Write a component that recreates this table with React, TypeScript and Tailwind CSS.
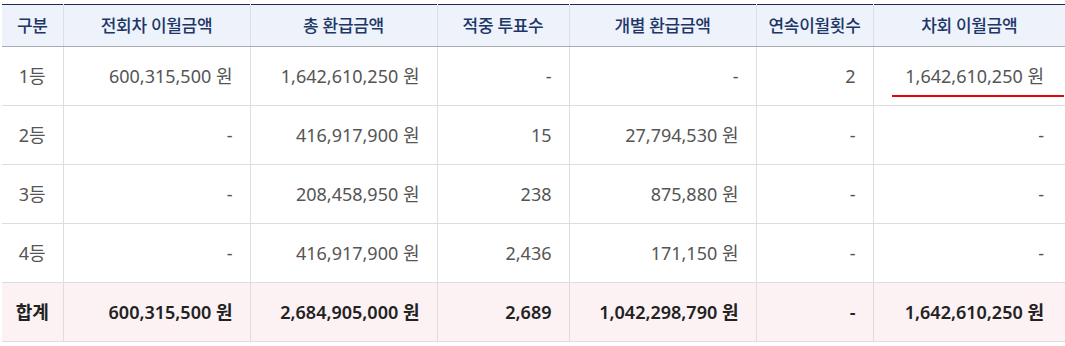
import React from 'react';

type Row = {
  rank: string;
  prev: string;
  total: string;
  winners: string;
  each: string;
  streak: string;
  next: string;
};

const rows: Row[] = [
  { rank: '1등', prev: '600,315,500 원', total: '1,642,610,250 원', winners: '-', each: '-', streak: '2', next: '1,642,610,250 원' },
  { rank: '2등', prev: '-', total: '416,917,900 원', winners: '15', each: '27,794,530 원', streak: '-', next: '-' },
  { rank: '3등', prev: '-', total: '208,458,950 원', winners: '238', each: '875,880 원', streak: '-', next: '-' },
  { rank: '4등', prev: '-', total: '416,917,900 원', winners: '2,436', each: '171,150 원', streak: '-', next: '-' }
];

const sum: Row = {
  rank: '합계',
  prev: '600,315,500 원',
  total: '2,684,905,000 원',
  winners: '2,689',
  each: '1,042,298,790 원',
  streak: '-',
  next: '1,642,610,250 원'
};

const headers = ['구분', '전회차 이월금액', '총 환급금액', '적중 투표수', '개별 환급금액', '연속이월횟수', '차회 이월금액'];

const font = { fontFamily: "'Noto Sans', 'Noto Sans CJK KR', sans-serif" };

export default function App() {
  const cell = 'h-[59px] border-b border-l border-[#dddddd] pr-[17px] text-right align-middle first:border-l-0';

  return (
    <div className="w-[1065px] h-[346px] bg-white pt-1 pl-0.5 overflow-hidden" style={font}>
      <div className="relative">
        <table className="w-[1063px] border-collapse table-fixed text-[18px] leading-6">
          <colgroup>
            <col className="w-[61px]" />
            <col className="w-[187px]" />
            <col className="w-[187px]" />
            <col className="w-[132px]" />
            <col className="w-[187px]" />
            <col className="w-[117px]" />
            <col />
          </colgroup>
          <thead>
            <tr className="border-t border-[#1d2c4f] bg-[#eef2fb]">
              {headers.map((h) => (
                <th
                  key={h}
                  className="h-[42px] border-b border-l border-b-[#a9acb2] border-l-[#dcdfe6] first:border-l-0 text-center align-middle text-[17px] font-medium text-[#1c3767] tracking-[-0.3px]"
                >
                  {h}
                </th>
              ))}
            </tr>
          </thead>
          <tbody className="text-[#555555]">
            {rows.map((r) => (
              <tr key={r.rank}>
                <td className={`${cell} !text-center !pr-0`}>{r.rank}</td>
                <td className={cell}>{r.prev}</td>
                <td className={cell}>{r.total}</td>
                <td className={cell}>{r.winners}</td>
                <td className={cell}>{r.each}</td>
                <td className={cell}>{r.streak}</td>
                <td className={`${cell} !pr-[21px]`}>{r.next}</td>
              </tr>
            ))}
            <tr className="bg-[#fcf1f3] font-semibold text-[#222222]">
              <td className={`${cell} !text-center !pr-0`}>{sum.rank}</td>
              <td className={cell}>{sum.prev}</td>
              <td className={cell}>{sum.total}</td>
              <td className={cell}>{sum.winners}</td>
              <td className={cell}>{sum.each}</td>
              <td className={cell}>{sum.streak}</td>
              <td className={`${cell} !pr-[21px]`}>{sum.next}</td>
            </tr>
          </tbody>
        </table>
        {/* red annotation under next-round carryover */}
        <div className="absolute left-[890px] top-[91px] w-[172px] h-[2px] bg-[#e8000b]" />
      </div>
    </div>
  );
}
